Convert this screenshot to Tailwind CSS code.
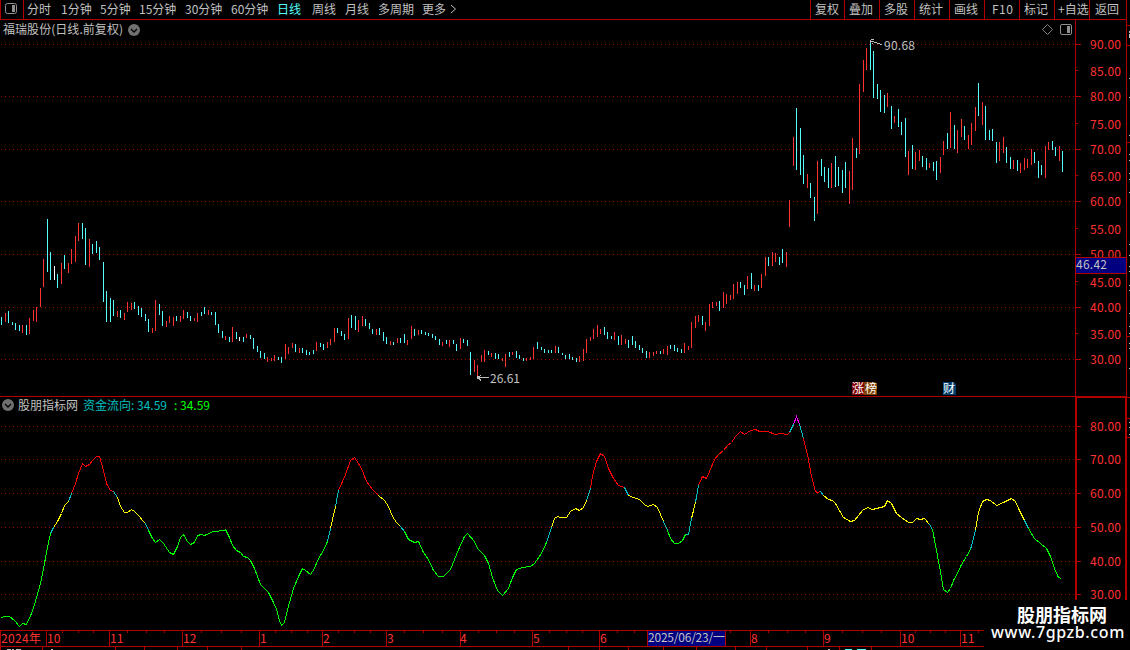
<!doctype html>
<html lang="zh-CN">

<head>
  <title>福瑞股份 日线</title>
  <meta charset="UTF-8">
  <meta name="viewport" content="width=device-width, initial-scale=1.0">
  <script src="https://cdn.jsdelivr.net/npm/@tailwindcss/browser@4"></script>
</head>

<body class="bg-black">
  <div class="relative w-[1130px] h-[650px] overflow-hidden bg-black text-[#c0c0c0] text-[12px] leading-none font-['Noto_Sans_CJK_SC',sans-serif]">
    <header class="flex w-[1127px] h-5 border-b border-r border-[#b00000] whitespace-nowrap">
      <div class="w-6 border-l border-r border-[#b00000] flex items-center">
        <svg class="ml-1 -mt-0.5" width="13" height="12" viewBox="0 0 13 12">
          <rect x="0.5" y="0.5" width="11" height="10" rx="2" fill="none" stroke="#909090" />
          <rect x="7" y="2" width="3" height="7" fill="#909090" />
        </svg>
      </div>
      <nav class="flex items-center pl-[3px] pb-px">
        <a class="w-[34px]">分时</a>
        <a class="w-[39px]">1分钟</a>
        <a class="w-[39px]">5分钟</a>
        <a class="w-[46px]">15分钟</a>
        <a class="w-[46px]">30分钟</a>
        <a class="w-[46px]">60分钟</a>
        <a class="w-[35px] text-[#54fcfc]">日线</a>
        <a class="w-[33px]">周线</a>
        <a class="w-[33px]">月线</a>
        <a class="w-[44px]">多周期</a>
        <a class="flex items-center gap-1">更多
          <svg width="7" height="10" viewBox="0 0 7 10" fill="none" stroke="#c0c0c0"><path d="M1 1L5.5 5L1 9" /></svg>
        </a>
      </nav>
      <div class="flex ml-auto *:border-l *:border-[#b00000] *:flex *:items-center *:pb-px *:pl-1">
        <a class="w-[34px]">复权</a>
        <a class="w-[35px]">叠加</a>
        <a class="w-[35px]">多股</a>
        <a class="w-[35px]">统计</a>
        <a class="w-[35px]">画线</a>
        <a class="w-[35px]"><span class="ml-[3px] tracking-[0.5px]">F10</span></a>
        <a class="w-[35px]">标记</a>
        <a class="w-[35px]"><span class="-ml-px">+自选</span></a>
        <a class="w-[37px]"><span class="ml-px">返回</span></a>
      </div>
    </header>

    <div class="flex items-center justify-between h-[19px] pl-[3px] pr-[58px]">
      <div class="flex items-center gap-[5px]">
        <span class="pb-px tracking-[0.05px]">福瑞股份(日线.前复权)</span>
        <svg width="12" height="12" viewBox="0 0 12 12"><circle cx="6" cy="6" r="6" fill="#707070" /><path d="M3 5L6 8L9 5" fill="none" stroke="#000" stroke-width="1.3" /></svg>
      </div>
      <div class="flex items-center gap-[7px]">
        <svg width="11" height="11" viewBox="0 0 11 11"><path d="M5.5 .5L10.5 5.5L5.5 10.5L.5 5.5Z" fill="none" stroke="#808080" /></svg>
        <svg width="12" height="11" viewBox="0 0 12 11"><rect x=".5" y=".5" width="11" height="10" rx="1.5" fill="none" stroke="#909090" /><rect x="7" y="2" width="3" height="7" fill="#909090" /></svg>
      </div>
    </div>

    <!-- price bars, fund flow line and axes share one coordinate system -->
    <svg class="absolute left-0 top-0" width="1130" height="650" viewBox="0 0 1130 650" font-size="12">
      <!-- grid -->
      <path d="M1 44.5H1075M1 96.5H1075M1 149.5H1075M1 201.5H1075M1 254.5H1075M1 307.5H1075M1 359.5H1075M1 426.5H1075M1 459.5H1075M1 493.5H1075M1 527.5H1075M1 561.5H1075M1 594.5H1075" stroke="#a00000" stroke-dasharray="1 3" shape-rendering="crispEdges" />

      <!-- frame and ticks -->
      <g fill="none" stroke="#b00000" shape-rendering="crispEdges">
        <path d="M1075.5 20V396M1126.5 0V630M0 396.5H1127M0 630.5H1075M0 646.5H1075" />
        <path d="M1076 396V630M1126 396V630M1075 397H1127" stroke-width="2" />
        <path d="M1076 44.5h5M1076 96.5h5M1076 149.5h5M1076 201.5h5M1076 254.5h5M1076 307.5h5M1076 359.5h5M1076 426.5h5M1076 459.5h5M1076 493.5h5M1076 527.5h5M1076 561.5h5M1076 594.5h5" />
        <path d="M1076 70.5h2M1076 123.5h2M1076 175.5h2M1076 228.5h2M1076 281.5h2M1076 333.5h2" />
        <path d="M0.5 631V646M46.5 631V646M109.5 631V646M182.5 631V646M259.5 631V646M322.5 631V646M386.5 631V646M460.5 631V646M532.5 631V646M599.5 631V646M750.5 631V646M823.5 631V646M900.5 631V646M960.5 631V646" />
        <path d="M62.5 631v2M78.5 631v2M93.5 631v2M127.5 631v2M146.5 631v2M164.5 631v2M201.5 631v2M221.5 631v2M241.5 631v2M275.5 631v2M291.5 631v2M307.5 631v2M338.5 631v2M354.5 631v2M370.5 631v2M404.5 631v2M423.5 631v2M442.5 631v2M478.5 631v2M496.5 631v2M514.5 631v2M549.5 631v2M566.5 631v2M582.5 631v2M617.5 631v2M634.5 631v2M730.5 631v2M768.5 631v2M787.5 631v2M805.5 631v2M842.5 631v2M862.5 631v2M881.5 631v2M915.5 631v2M930.5 631v2M945.5 631v2M978.5 631v2" />
        <path d="M0.5 647v3M42.5 647v3M115.5 647v3M144.5 647v3M177.5 647v3M207.5 647v3M241.5 647v3M568.5 647v3M599.5 647v3M628.5 647v3M663.5 647v3M696.5 647v3M735.5 647v3M766.5 647v3M807.5 647v3M839.5 647v3M871.5 647v3" />
        <path d="M1127 25.5h3M1127 45.5h3M1127 142.5h3M1127 336.5h3M1127 397.5h3M1127 418.5h3M1127 437.5h3" />
        <path d="M1129.5 31v2M1129.5 34v4M1129.5 78v1M1129.5 97v1M1129.5 135v1M1129.5 154v1M1129.5 160v1M1129.5 173v1M1129.5 179v1M1129.5 192v1M1129.5 244v1M1129.5 255v1M1129.5 266v1M1129.5 271v1M1129.5 285v1M1129.5 290v1M1129.5 313v1M1129.5 326v1M1129.5 333v1M1129.5 343v1M1129.5 348v1M1129.5 368v1M1129.5 422v1M1129.5 427v1M1129.5 434v1M7 649.5h4M12 649.5h2M16 649.5h5M51 649.5h2M828 649.5h2" stroke="#c0c0c0" />
        <path d="M845 649.5h7M857 649.5h9" stroke="#54fcfc" />
      </g>

      <!-- price bars -->
      <g fill="none" shape-rendering="crispEdges" transform="translate(.5 0)">
        <path stroke="#ff3232" d="M5 313V322M22 325V333M29 318V334M33 310V321M36 307V322M40 288V307M43 259V287M61 263V284M68 263V273M71 249V264M75 236V262M78 223V241M89 239V267M117 311V317M124 313V320M127 302V312M131 303V310M152 328V333M155 300V331M166 321V327M169 316V323M173 317V326M180 316V322M183 310V319M194 318V321M197 313V322M208 310V315M225 336V340M232 327V342M246 334V338M267 357V362M271 358V361M274 355V361M285 344V359M288 347V354M292 343V348M299 348V353M316 342V351M327 342V348M330 339V345M334 328V342M348 318V339M358 320V332M362 316V326M376 329V335M390 341V345M397 338V343M407 340V345M411 326V339M418 330V335M442 342V346M449 340V347M460 338V349M474 360V372M477 365V376M481 355V362M484 350V362M491 353V357M502 358V361M505 354V367M512 352V355M526 358V361M530 357V360M533 347V359M555 346V353M579 356V362M583 349V361M586 339V353M590 337V341M593 329V339M597 325V337M600 329V334M614 332V340M621 335V345M625 339V344M649 352V358M653 352V356M656 351V354M663 349V354M667 346V355M684 343V353M688 346V350M691 322V348M695 316V328M698 315V322M705 322V331M709 304V326M712 302V308M716 302V306M723 292V308M726 294V304M730 295V300M733 284V299M737 282V294M747 276V289M754 285V291M761 274V288M765 257V276M772 252V266M775 253V262M786 252V267M789 200V227M793 137V166M807 174V188M817 161V214M831 163V188M849 171V204M852 138V190M859 84V154M863 60V92M866 48V70M887 93V107M894 116V123M908 151V175M915 152V170M919 150V161M929 163V168M940 157V173M943 141V155M950 112V148M957 130V153M961 119V137M968 135V149M971 123V145M975 107V131M982 102V125M999 142V161M1003 137V153M1013 160V169M1020 163V173M1024 158V170M1027 159V168M1031 149V165M1045 146V178M1048 142V150M1059 146V161" />
        <path stroke="#54fcfc" d="M1 317V325M8 311V323M12 322V325M15 323V330M19 325V331M26 325V335M47 219V272M50 252V280M57 274V288M64 255V269M82 223V239M85 228V265M92 244V254M96 241V253M99 247V260M103 262V302M106 291V322M110 298V322M113 300V316M120 310V318M134 302V309M138 306V315M141 308V317M145 314V321M148 319V332M159 304V315M162 311V326M176 316V321M187 312V318M190 316V321M201 312V316M204 307V314M211 312V315M215 312V325M218 324V333M222 331V338M229 337V342M236 332V339M243 337V342M250 335V339M253 338V349M257 346V352M260 351V358M264 353V359M278 357V360M281 357V363M295 344V352M302 348V353M306 350V355M309 352V355M313 350V354M320 343V347M323 344V350M337 328V333M341 331V336M344 334V340M351 315V328M355 316V330M365 319V326M369 323V329M372 329V334M379 328V335M383 332V341M386 337V344M393 342V345M400 338V343M404 334V343M414 329V336M421 330V334M425 332V335M428 333V336M432 334V338M435 336V340M439 339V345M446 340V344M453 340V344M456 344V351M463 339V343M467 340V346M470 352V375M488 351V355M495 353V359M498 354V359M509 352V357M516 351V358M519 355V359M523 358V361M537 342V349M541 347V350M544 349V353M548 350V353M551 350V353M558 347V353M562 353V355M565 355V359M569 354V359M572 357V360M576 358V362M604 327V335M607 332V339M611 336V339M618 336V345M628 340V348M632 336V345M635 341V348M639 345V350M642 348V353M646 351V358M660 351V354M670 345V349M674 345V351M677 348V352M681 349V353M702 316V325M719 301V311M740 282V288M744 285V295M751 273V289M758 285V291M768 257V266M779 257V265M782 249V263M796 108V170M800 128V175M803 155V184M810 183V198M814 197V221M821 159V176M824 167V182M828 168V188M835 156V187M838 167V186M842 170V193M845 162V188M856 148V158M870 40V70M873 51V98M877 84V99M880 90V112M884 95V113M891 106V129M898 109V127M901 122V135M905 118V157M912 145V169M922 156V167M926 158V170M933 162V171M936 161V180M947 133V149M954 125V149M964 126V140M978 83V116M985 106V140M989 130V140M992 129V141M996 142V163M1006 147V163M1010 157V169M1017 160V171M1034 152V163M1038 161V178M1041 165V175M1052 141V150M1055 147V156M1062 151V172" />
        <path stroke="#fff" d="M54 266V280M239 337V341" />
      </g>

      <!-- high and low marks -->
      <g fill="none" stroke="#c0c0c0" shape-rendering="crispEdges">
        <path d="M870.5 43V40M871 39.5h3M871 41.5h3M874 42.5h3M877 43.5h3M880 44.5h2M872 43.5h1" />
        <path d="M477 377.5H489M478 377.5L481 375M478 377.5L481 380.5" />
        <path d="M477 376.5h2M477 378.5h2" />
      </g>
      <g fill="#c0c0c0">
        <text x="884" y="50" textLength="31">90.68</text>
        <text x="490" y="383" textLength="30">26.61</text>
      </g>

      <!-- fund flow line -->
      <g fill="none" shape-rendering="crispEdges" transform="translate(.5 .5)">
        <path stroke="#00ff00" d="M1 617L4 616L9 616L14 620L19 626L22 623L26 624L31 613L34 604L36 597L40 583L43 568L47 547L50 533M148 530L152 538L155 542L159 539L163 543L169 552L173 554L177 546L180 537L183 534L187 541L190 544L194 542L197 535L201 534L204 535L213 531L224 530L225 529L229 537L232 545L236 550L240 552L243 556L247 557L250 560L254 568L257 576L260 584L264 588L268 592L273 602L276 609L279 620L281 625L284 622L289 602L293 588L298 576L302 568L305 570L310 574L314 568L317 560L323 550L327 541M404 531L408 539L414 542L418 541L423 552L428 559L433 570L438 576L443 576L450 569L458 549L464 536L467 533L474 541L477 548L484 555L488 563L492 577L497 590L502 595L508 588L512 577L516 569L522 567L530 566L534 563L541 553L546 542M667 530L670 538L674 543L678 543L682 540L685 534M932 529L935 545L939 566L943 589L947 592L950 588L953 580L957 573L961 564L966 556L970 549M1028 528L1034 538L1040 543L1046 548L1050 556L1054 568L1058 577L1061 578" />
        <path stroke="#00c0c0" d="M50 533L53 527M68 501L71 493M113 491L117 497M145 523L148 530M327 541L330 528M335 506L338 490M400 526L404 531M546 542L551 527M586 500L590 488M624 487L628 495M663 521L667 530M685 534L688 534L690 523L691 518M695 502L698 485M789 432L793 424M799 424L803 438M820 491L823 495M929 524L932 529M970 549L975 530M1024 520L1028 528" />
        <path stroke="#ffff00" d="M53 527L57 521L61 513L64 505L68 501M117 497L120 506L124 512L127 512L131 509L134 511L138 515L143 521L145 523M330 528L335 506M378 495L384 500L388 506L392 516L396 522L400 526M551 527L554 518L557 516L560 517L566 517L570 511L575 508L579 510L583 507L586 500M628 495L633 497L639 499L644 504L647 506L653 504L657 507L660 514L663 521M691 518L695 502M823 495L828 499L832 500L835 503L839 510L843 517L850 521L854 520L862 510L867 507L872 509L880 507L884 506L887 500L891 503L896 513L901 517L908 522L912 522L916 518L920 519L924 518L929 524M975 530L978 512L982 501L986 499L990 500L996 505L1003 502L1011 498L1015 501L1019 510L1024 520" />
        <path stroke="#ff0000" d="M71 493L75 483L78 473L82 463L85 466L89 464L92 460L96 456L99 456L103 470L106 483L110 490L113 491M338 490L345 474L350 460L354 457L358 463L362 470L366 481L372 489L378 495M590 488L592 475L596 461L600 453L604 456L608 468L613 478L618 485L624 487M698 485L702 476L706 478L709 471L714 459L718 454L723 450L727 445L731 442L735 436L740 431L744 434L750 430L755 429L759 431L767 431L775 434L780 433L787 434L789 432M803 438L807 454L811 476L815 491L817 492L820 491" />
        <path stroke="#ff00ff" d="M793 424L796 416L799 424" />
      </g>

      <!-- axis labels -->
      <g fill="#ff3232">
        <text x="1090" y="49" textLength="31">90.00</text>
        <text x="1090" y="76" textLength="31">85.00</text>
        <text x="1090" y="101" textLength="31">80.00</text>
        <text x="1090" y="129" textLength="31">75.00</text>
        <text x="1090" y="154" textLength="31">70.00</text>
        <text x="1090" y="181" textLength="31">65.00</text>
        <text x="1090" y="206" textLength="31">60.00</text>
        <text x="1090" y="234" textLength="31">55.00</text>
        <text x="1090" y="259" textLength="31">50.00</text>
        <text x="1090" y="287" textLength="31">45.00</text>
        <text x="1090" y="312" textLength="31">40.00</text>
        <text x="1090" y="339" textLength="31">35.00</text>
        <text x="1090" y="364" textLength="31">30.00</text>
        <text x="1090" y="431" textLength="31">80.00</text>
        <text x="1090" y="464" textLength="31">70.00</text>
        <text x="1090" y="498" textLength="31">60.00</text>
        <text x="1090" y="532" textLength="31">50.00</text>
        <text x="1090" y="566" textLength="31">40.00</text>
        <text x="1090" y="599" textLength="31">30.00</text>
        <text x="1" y="643" textLength="40">2024年</text>
        <text x="47" y="643">10</text>
        <text x="110" y="643">11</text>
        <text x="183" y="643">12</text>
        <text x="260" y="643">1</text>
        <text x="323" y="643">2</text>
        <text x="387" y="643">3</text>
        <text x="460" y="643">4</text>
        <text x="533" y="643">5</text>
        <text x="600" y="643">6</text>
        <text x="751" y="643">8</text>
        <text x="824" y="643">9</text>
        <text x="901" y="643">10</text>
        <text x="961" y="643">11</text>
      </g>

      <!-- cursor price and date -->
      <rect x="1076" y="257" width="50" height="17" fill="#000080" />
      <path d="M1076 257.5H1126M1076 273.5H1126" stroke="#b00000" />
      <text x="1076" y="269" fill="#c0c0c0" textLength="31">46.42</text>
      <rect x="647.5" y="630.5" width="78" height="16" fill="#000080" stroke="#b00000" />
      <text x="648" y="642" fill="#c0c0c0" textLength="77">2025/06/23/一</text>

      <!-- event badges -->
      <path d="M852 382h12v13h-12z" fill="#800000" />
      <path d="M864 382h11l2 2v11h-13z" fill="#804000" />
      <path d="M943 382h11l2 2v11h-13z" fill="#003c6e" />
      <g fill="#fff">
        <text x="852" y="393">涨</text>
        <text x="865" y="393">榜</text>
        <text x="943" y="393">财</text>
      </g>
    </svg>

    <div class="flex items-center h-4 mt-[358px] pl-0.5 whitespace-nowrap">
      <svg width="12" height="12" viewBox="0 0 12 12"><circle cx="6" cy="6" r="6" fill="#707070" /><path d="M3 5L6 8L9 5" fill="none" stroke="#000" stroke-width="1.3" /></svg>
      <span class="w-[65px] pl-1">股朋指标网</span>
      <span class="w-[94px] pl-1 text-[#00c0c0]">资金流向: 34.59</span>
      <span class="pl-px text-[#00ff00]">: 34.59</span>
    </div>

    <div class="absolute left-[984px] top-[600px] w-[146px] h-[50px] bg-black text-white flex flex-col items-center pt-1 pl-0.5">
      <div class="text-[18px] leading-5 font-bold pl-2">股朋指标网</div>
      <div class="text-[16px] leading-4 font-medium tracking-[0.6px] font-['Noto_Sans',sans-serif]">www.7gpzb.com</div>
    </div>
  </div>
</body>

</html>
